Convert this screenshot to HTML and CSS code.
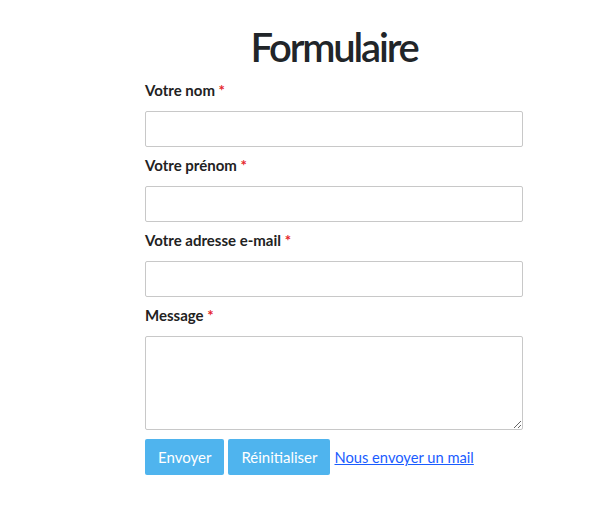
FILE: index.html
```html
<!DOCTYPE html>
<html lang="fr">
<head>
<meta charset="utf-8">
<title>Formulaire</title>
<link rel="stylesheet" href="styles.css">
</head>
<body>
<form class="form">
  <h1 class="title">Formulaire</h1>
  <div class="field">
    <label class="label" for="nom">Votre nom <span class="req">*</span></label>
    <input class="input" id="nom" type="text">
  </div>
  <div class="field">
    <label class="label" for="prenom">Votre prénom <span class="req">*</span></label>
    <input class="input" id="prenom" type="text">
  </div>
  <div class="field">
    <label class="label" for="email">Votre adresse e-mail <span class="req">*</span></label>
    <input class="input" id="email" type="email">
  </div>
  <div class="field">
    <label class="label" for="msg">Message <span class="req">*</span></label>
    <textarea class="input area" id="msg"></textarea>
  </div>
  <div class="actions">
    <button class="btn" type="submit">Envoyer</button>
    <button class="btn" type="reset">Réinitialiser</button>
    <a class="link" href="#">Nous envoyer un mail</a>
  </div>
</form>
</body>
</html>
```
FILE: styles.css
```css
html, body {
  margin: 0;
  padding: 0;
  background: #fff;
}
body {
  font-family: "Lato", "Open Sans", sans-serif;
  color: #222;
}
.form {
  width: 378px;
  margin-left: 145px;
  display: flex;
  flex-direction: column;
}
.title {
  margin: 23px 0 10px;
  font-size: 40px;
  line-height: 48px;
  font-weight: 600;
  letter-spacing: -2.2px;
  text-align: center;
  color: #212529;
}
.field {
  display: flex;
  flex-direction: column;
  margin-bottom: 9px;
}
.label {
  font-size: 15px;
  line-height: 18px;
  font-weight: 700;
  color: #222;
  margin-bottom: 12px;
}
.req {
  color: #e5252a;
}
.input {
  box-sizing: border-box;
  width: 378px;
  height: 36px;
  border: 1px solid #c8c8c8;
  border-radius: 2px;
  background: #fff;
  margin: 0;
  font-family: inherit;
}
.area {
  height: 94px;
  resize: vertical;
}
.actions {
  display: flex;
  align-items: center;
  gap: 4px;
}
.btn {
  height: 36px;
  border: none;
  border-radius: 2px;
  background: #4fb4ee;
  color: #fff;
  font-family: inherit;
  font-size: 15px;
  padding: 0 13px;
}
.link {
  font-size: 14.7px;
  color: #1a5cff;
  text-decoration: underline;
}
```
